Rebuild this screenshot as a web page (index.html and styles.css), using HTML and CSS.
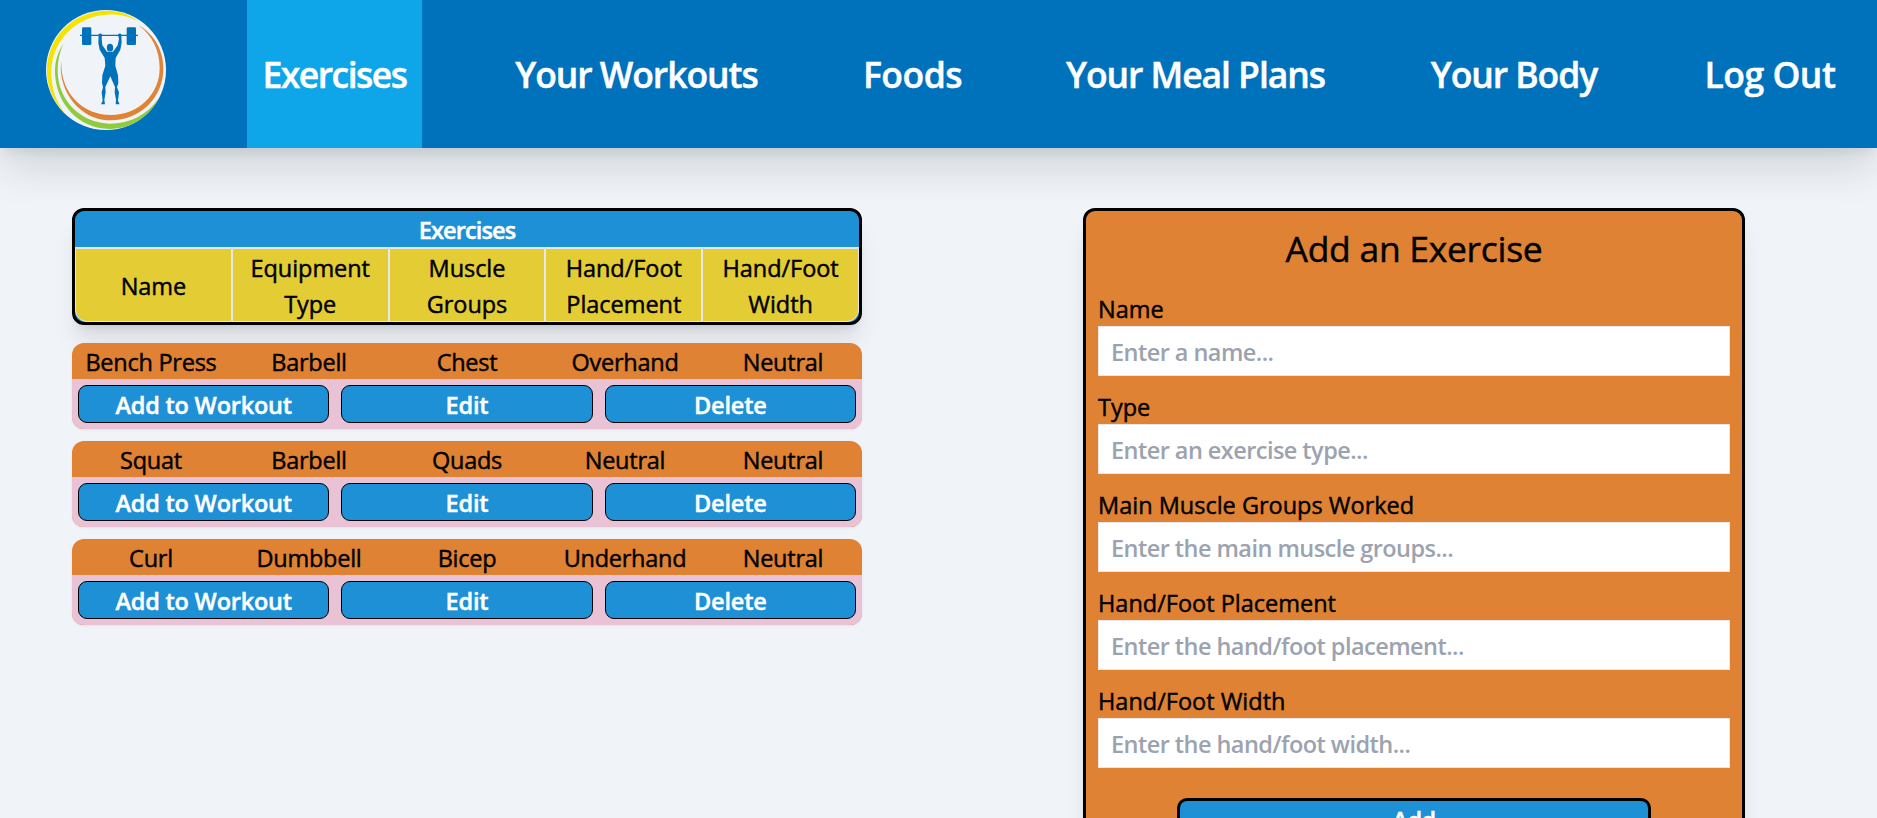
FILE: index.html
```html
<!DOCTYPE html>
<html lang="en">
<head>
<meta charset="utf-8">
<title>Exercises</title>
<link rel="stylesheet" href="styles.css">
</head>
<body>
<header class="header">
  <svg class="logo" viewBox="48 30 360 360" aria-label="Logo">
    <circle cx="228" cy="210" r="180" fill="#f0f4f9"/>
    <path fill="#f5e400" d="M325 64C298 42 264 32 232 32C130 32 51 112 51 212C51 262 72 308 105 340C78 306 63 262 64 212C67 120 140 48 232 44C266 42 298 50 325 64Z"/>
    <path fill="#8fcb3b" d="M101 131C84 154 75 182 75 214C75 309 146 387 238 387C304 387 358 350 386 295C352 345 300 371 240 371C150 369 84 300 83 214C83 180 89 155 101 131Z"/>
    <path fill="#df8435" d="M94 183C90 206 93 231 101 254C123 318 177 361 242 361C332 361 400 293 400 205C400 150 372 103 327 76C367 108 389 151 389 204C389 284 324 345 242 345C181 345 127 309 105 252C96 229 93 206 94 183Z"/>
    <g fill="#0072bc">
      <path d="M150 104H324V108H150Z"/>
      <rect x="156" y="82" width="28" height="53" rx="4"/>
      <rect x="290" y="82" width="28" height="53" rx="4"/>
      <ellipse cx="240" cy="143" rx="9.500" ry="11.500"/>
      <path d="M206 102Q211 98 216 103L215 116L217 136L231 155H249L263 136L267 117L264 103Q269 98 274 102L275 129L271 149L257 174L256 197L264 226L265 249L261 262L267 277L264 302L269 313H257L258 299L254 277L255 261L241 229L226 261L227 277L223 299L225 313H213L218 302L215 277L219 262L216 249L217 226L226 197L224 174L209 149L205 129Z"/>
    </g>
  </svg>
  <nav class="nav">
    <a class="nav-item active tight">Exercises</a>
    <a class="nav-item">Your Workouts</a>
    <a class="nav-item loose">Foods</a>
    <a class="nav-item">Your Meal Plans</a>
    <a class="nav-item">Your Body</a>
    <a class="nav-item loose">Log Out</a>
  </nav>
</header>
<main class="main">
  <section class="list">
    <div class="table">
      <div class="table-title">Exercises</div>
      <div class="table-head">
        <div>Name</div><div>Equipment<br>Type</div><div>Muscle<br>Groups</div><div>Hand/Foot<br>Placement</div><div>Hand/Foot<br>Width</div>
      </div>
    </div>
    <article class="card">
      <div class="card-row"><span>Bench Press</span><span>Barbell</span><span>Chest</span><span>Overhand</span><span>Neutral</span></div>
      <div class="actions"><button class="btn">Add to Workout</button><button class="btn">Edit</button><button class="btn">Delete</button></div>
    </article>
    <article class="card">
      <div class="card-row"><span>Squat</span><span>Barbell</span><span>Quads</span><span>Neutral</span><span>Neutral</span></div>
      <div class="actions"><button class="btn">Add to Workout</button><button class="btn">Edit</button><button class="btn">Delete</button></div>
    </article>
    <article class="card">
      <div class="card-row"><span>Curl</span><span>Dumbbell</span><span>Bicep</span><span>Underhand</span><span>Neutral</span></div>
      <div class="actions"><button class="btn">Add to Workout</button><button class="btn">Edit</button><button class="btn">Delete</button></div>
    </article>
  </section>
  <form class="form">
    <h2 class="form-title">Add an Exercise</h2>
    <label class="field">Name<input class="input" placeholder="Enter a name..."></label>
    <label class="field">Type<input class="input" placeholder="Enter an exercise type..."></label>
    <label class="field">Main Muscle Groups Worked<input class="input" placeholder="Enter the main muscle groups..."></label>
    <label class="field">Hand/Foot Placement<input class="input" placeholder="Enter the hand/foot placement..."></label>
    <label class="field">Hand/Foot Width<input class="input" placeholder="Enter the hand/foot width..."></label>
    <button class="submit" type="button">Add</button>
  </form>
</main>
</body>
</html>
```
FILE: styles.css
```css
* { box-sizing: border-box; }
body {
  margin: 0;
  height: 818px;
  overflow: hidden;
  background: #f0f4f9;
  color: #000;
  font: 500 23.5px/38px "Segoe UI", "Open Sans", "Noto Sans", sans-serif;
  -webkit-text-stroke: .45px currentColor;
}
button, input { font: inherit; letter-spacing: inherit; }

.header {
  display: flex;
  height: 148px;
  padding-left: 46px;
  background: #0072bc;
  box-shadow: 0 20px 42px -3px rgba(0, 12, 5, .14), 0 8px 12px -4px rgba(0, 12, 5, .08);
}
.logo { width: 120px; height: 120px; margin: 10px 81px 0 0; flex: none; }
.nav {
  display: grid;
  grid-template-columns: 175px 281px 123px 295px 194px 170px;
  column-gap: 74px;
  color: #fff;
  font-size: 35.5px;
  font-weight: 600;
  letter-spacing: -1.05px;
}
.nav-item { display: flex; align-items: center; justify-content: center; white-space: nowrap; }
.tight { letter-spacing: -1.5px; }
.loose { letter-spacing: -.5px; }
.active { background: #0ea5e9; }

.main { display: flex; justify-content: space-between; align-items: flex-start; padding: 60px 132px 0 72px; }
.list { width: 790px; }
.table {
  margin-bottom: 18px;
  overflow: hidden;
  border: 3px solid #000;
  border-radius: 12px;
  background: #1e90d6;
  text-align: center;
  box-shadow: 0 20px 25px -5px rgba(0, 0, 0, .1), 0 8px 10px -6px rgba(0, 0, 0, .1);
}
.table-title { height: 37px; border-bottom: 1px solid #e5e7eb; color: #fff; font-weight: 600; letter-spacing: -.85px; }
.table-head { display: grid; grid-template-columns: repeat(5, 1fr); line-height: 36px; letter-spacing: -.05px; }
.table-head div { display: flex; align-items: center; justify-content: center; height: 74px; padding-top: 2px; border: 1px solid #e5e7eb; background: #e3cc34; }
.table-head div:first-child { border-bottom-left-radius: 12px; }
.table-head div:last-child { border-bottom-right-radius: 12px; }

.card { margin-bottom: 12px; overflow: hidden; border-radius: 12px; background: #df8233; text-align: center; box-shadow: 0 1px 3px rgba(0, 0, 0, .06), 0 1px 2px -1px rgba(0, 0, 0, .06); }
.card-row { display: grid; grid-template-columns: repeat(5, 1fr); height: 36px; letter-spacing: -.25px; }
.actions { display: grid; grid-template-columns: repeat(3, 1fr); background: #eac2d5; }
.btn { height: 38px; margin: 6px; padding: 0; border: 1px solid #000; border-radius: 9px; background: #1e90d6; color: #fff; font-weight: 600; letter-spacing: -.2px; }

.form {
  width: 662px;
  padding: 17px 12px 12px;
  border: 3px solid #000;
  border-radius: 12px;
  background: #df8233;
  box-shadow: 0 20px 25px -5px rgba(0, 0, 0, .1), 0 8px 10px -6px rgba(0, 0, 0, .1);
}
.form-title { margin: 0 0 22px; text-align: center; font-size: 35.5px; line-height: 40px; font-weight: 500; letter-spacing: -.3px; }
.field { display: block; height: 86px; margin-bottom: 12px; }
.input { display: block; width: 100%; height: 50px; margin-top: -2px; padding: 8px 12px 6px; border: 1px solid #e5e7eb; background: #fff; font-weight: 600; letter-spacing: -.55px; outline: none; -webkit-text-stroke: 0; }
.input::placeholder { color: #9ca3af; opacity: 1; }
.submit { display: block; width: 474px; margin: 30px auto 0; padding: 0; border: 3px solid #000; border-radius: 10px; background: #1e90d6; color: #fff; font-weight: 600; letter-spacing: -.5px; }
```
